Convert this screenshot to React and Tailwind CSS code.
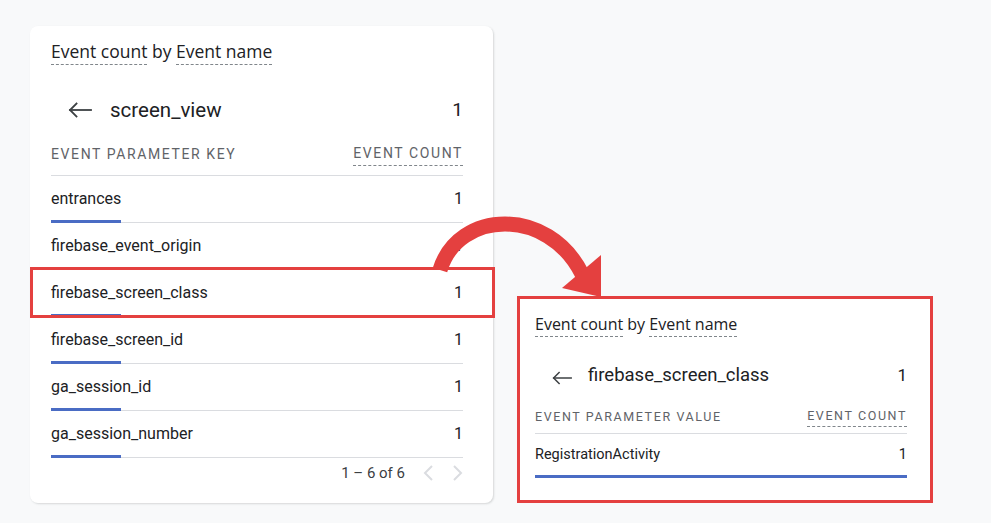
import React from "react";

const FONT = { fontFamily: "Roboto, 'Noto Sans', Arial, sans-serif" };
const TITLE_FONT = { fontFamily: "'Open Sans', Roboto, Arial, sans-serif" };

const KEY_ROWS = [
  { key: "entrances", count: 1 },
  { key: "firebase_event_origin", count: 1 },
  { key: "firebase_screen_class", count: 1, highlight: true },
  { key: "firebase_screen_id", count: 1 },
  { key: "ga_session_id", count: 1 },
  { key: "ga_session_number", count: 1 },
];

function BackArrow({ className }) {
  return (
    <svg viewBox="0 0 24 16" className={className} fill="none" stroke="#3c4043" strokeWidth="1.8" strokeLinecap="square">
      <path d="M2 8H23" />
      <path d="M8.5 1.5L2 8l6.5 6.5" />
    </svg>
  );
}

function Dashed({ children }) {
  return <span className="border-b border-dashed border-[#80868b] pb-[1px]">{children}</span>;
}

function Chevron({ dir }) {
  return (
    <svg viewBox="0 0 24 24" className="h-[24px] w-[24px]" fill="none" stroke="#dadce0" strokeWidth="2">
      {dir === "left" ? <path d="M15 5l-7 7 7 7" /> : <path d="M9 5l7 7-7 7" />}
    </svg>
  );
}

function CurvedArrow() {
  return (
    <svg className="pointer-events-none absolute left-0 top-0" width="991" height="523" viewBox="0 0 991 523">
      <path d="M440 270 C 458 210, 548 206, 582 274" fill="none" stroke="#e4403f" strokeWidth="15" />
      <path d="M562 288 L601 255 L601 297 Z" fill="#e4403f" />
    </svg>
  );
}

function KeyCard() {
  return (
    <div className="h-[477px] w-[463px] rounded-lg bg-white pl-[21px] pr-[30px] shadow-[1px_1px_2px_rgba(60,64,67,0.18)]">
      <div style={TITLE_FONT} className="pt-[13px] text-[17.5px] leading-6 text-[#202124]">
        <Dashed>Event count</Dashed> by <Dashed>Event name</Dashed>
      </div>

      <div className="mt-[27px] flex h-[40px] items-center justify-between">
        <div className="flex items-center">
          <BackArrow className="ml-[17px] h-[16px] w-[24px]" />
          <span className="ml-[18px] text-[20.5px] text-[#202124]">screen_view</span>
        </div>
        <span className="text-[19px] text-[#202124]">1</span>
      </div>

      <div className="flex h-[46px] items-center justify-between border-b border-[#dadce0] pt-[4px] text-[14px] tracking-[1.6px] text-[#5f6368]">
        <span>EVENT PARAMETER KEY</span>
        <Dashed>EVENT COUNT</Dashed>
      </div>

      {KEY_ROWS.map((row) => (
        <div key={row.key} className="relative">
          <div className="flex h-[44px] items-center justify-between pt-[1px] text-[16px] text-[#202124]">
            <span>{row.key}</span>
            <span>{row.count}</span>
          </div>
          <div className="relative h-[3px]">
            <div className="absolute bottom-0 left-0 right-0 h-px bg-[#dadce0]" />
            <div className="absolute left-0 top-0 h-[3px] w-[70px] bg-[#4a6cc4]" />
          </div>
          {row.highlight && (
            <div className="absolute -bottom-[1px] -left-[21px] -right-[32px] -top-[3px] border-[3px] border-[#e4403f]" />
          )}
        </div>
      ))}

      <div className="-mr-[6px] flex items-center justify-end pt-[3px] text-[15px] text-[#3c4043]">
        <span className="mr-[12px]">1 – 6 of 6</span>
        <Chevron dir="left" />
        <span className="ml-[4px]">
          <Chevron dir="right" />
        </span>
      </div>
    </div>
  );
}

function ValueCard() {
  return (
    <div className="ml-[24px] h-[207px] w-[416px] border-[3px] border-[#e4403f] bg-white pl-[15px] pr-[23px]">
      <div style={TITLE_FONT} className="pt-[13px] text-[16px] leading-6 text-[#202124]">
        <Dashed>Event count</Dashed> by <Dashed>Event name</Dashed>
      </div>

      <div className="mt-[20px] flex h-[40px] items-center justify-between">
        <div className="flex items-center">
          <BackArrow className="ml-[17px] mt-[4px] h-[14px] w-[20px]" />
          <span className="ml-[16px] text-[18.5px] text-[#202124]">firebase_screen_class</span>
        </div>
        <span className="text-[17px] text-[#202124]">1</span>
      </div>

      <div className="flex h-[38px] items-center justify-between border-b border-[#dadce0] pt-[5px] text-[12.5px] tracking-[1.6px] text-[#5f6368]">
        <span>EVENT PARAMETER VALUE</span>
        <Dashed>EVENT COUNT</Dashed>
      </div>

      <div className="flex h-[41px] items-center justify-between text-[14.5px] text-[#202124]">
        <span>RegistrationActivity</span>
        <span>1</span>
      </div>
      <div className="h-[3px] w-full bg-[#4a6cc4]" />
    </div>
  );
}

export default function App() {
  return (
    <div style={FONT} className="relative flex h-[523px] w-[991px] items-end overflow-hidden bg-[#f8f9fa] pb-[20px] pl-[30px]">
      <KeyCard />
      <ValueCard />
      <CurvedArrow />
    </div>
  );
}
